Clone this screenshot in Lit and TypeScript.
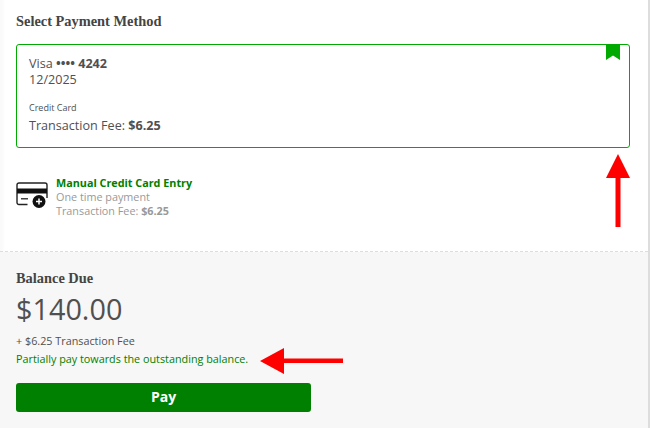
import { LitElement, css, html } from 'lit';
import { customElement } from 'lit/decorators.js';

@customElement('app-root')
export class AppRoot extends LitElement {
  render() {
    return html`
      <div class="page">
        <section class="methods">
          <h2>Select Payment Method</h2>
          <div class="card">
            <svg class="ribbon" width="14" height="16" viewBox="0 0 14 16"><path d="M0 0H14V16L7 11.500L0 16Z" fill="#00aa00"/></svg>
            <div class="line">Visa <b class="dots">••••</b> <b>4242</b></div>
            <div class="line">12/2025</div>
            <div class="type">Credit Card</div>
            <div class="line">Transaction Fee: <b>$6.25</b></div>
          </div>
          <div class="manual">
            <svg class="card-icon" width="32" height="28" viewBox="0 0 32 28" fill="none">
              <path d="M11.5 22.5H3a2 2 0 0 1-2-2V3a2 2 0 0 1 2-2h26a2 2 0 0 1 2 2v13" stroke="#222" stroke-width="1.4"/>
              <rect x="1" y="6.5" width="30" height="5" fill="#111"/>
              <rect x="5" y="16" width="7" height="1.5" fill="#444"/>
              <circle cx="23" cy="19.5" r="6.5" fill="#111"/>
              <path d="M23 16.5v6M20 19.5h6" stroke="#fff" stroke-width="1.5"/>
            </svg>
            <div>
              <div class="manual-title">Manual Credit Card Entry</div>
              <div class="muted">One time payment</div>
              <div class="muted">Transaction Fee: <b>$6.25</b></div>
            </div>
          </div>
        </section>
        <section class="balance">
          <h2>Balance Due</h2>
          <div class="amount">$140.00</div>
          <div class="fee">+ $6.25 Transaction Fee</div>
          <div class="partial">Partially pay towards the outstanding balance.</div>
          <button class="pay">Pay</button>
        </section>
        <svg class="arrow-up" width="24" height="74" viewBox="0 0 24 74"><path d="M12 0L24 24H14.500V73H9.500V24H0Z" fill="#ff0000"/></svg>
        <svg class="arrow-left" width="84" height="26" viewBox="0 0 84 26"><path d="M0 13L24 0V10.500H83V15H24V26Z" fill="#ff0000"/></svg>
      </div>
    `;
  }

  static styles = css`
    :host {
      display: block;
      font-family: "Open Sans", sans-serif;
      color: #505050;
    }
    .page {
      position: relative;
      width: 650px;
      height: 428px;
      overflow: hidden;
      background: linear-gradient(to right, #f9f9f9, #fff 6px);
      border-right: 2px solid #ddd;
      box-sizing: border-box;
    }
    h2 {
      margin: 0;
      font-family: "Liberation Serif", serif;
      font-size: 14.4px;
      line-height: 16px;
      font-weight: 700;
      color: #444;
    }
    .methods {
      height: 252px;
      box-sizing: border-box;
      padding: 13px 18px 0 16px;
      border-bottom: 1px dashed #ddd;
    }
    .card {
      position: relative;
      box-sizing: border-box;
      height: 104px;
      margin-top: 15px;
      padding: 11px 12px 9px;
      border: 1px solid #00aa00;
      border-radius: 3px;
    }
    .ribbon {
      position: absolute;
      top: -1px;
      right: 9px;
    }
    .line {
      font-size: 12.600px;
      line-height: 16px;
    }
    .type {
      margin-top: 13px;
      font-size: 9px;
      line-height: 14px;
    }
    .type + .line {
      margin-top: 3px;
    }
    .manual {
      display: flex;
      gap: 8px;
      margin-top: 28px;
      font-size: 10.800px;
      line-height: 14px;
    }
    .card-icon {
      margin-top: 6px;
    }
    .manual-title {
      font-weight: 700;
      color: #008000;
    }
    .muted {
      color: #999;
    }
    .balance {
      height: 176px;
      box-sizing: border-box;
      padding: 18px 16px 0;
      background: #f7f7f7;
    }
    .amount {
      margin-top: 4px;
      font-size: 28.800px;
      line-height: 38px;
    }
    .fee {
      margin-top: 6px;
      font-size: 10.800px;
      line-height: 14px;
    }
    .partial {
      margin-top: 4px;
      font-size: 10.800px;
      line-height: 14px;
      color: #008000;
    }
    .pay {
      display: block;
      width: 295px;
      height: 29px;
      margin-top: 17px;
      padding: 0 0 2px;
      border: 0;
      border-radius: 3px;
      background: #008000;
      color: #fff;
      font-family: "Open Sans", sans-serif;
      font-size: 14px;
      font-weight: 700;
    }
    .arrow-up {
      position: absolute;
      left: 606px;
      top: 154px;
    }
    .arrow-left {
      position: absolute;
      left: 260px;
      top: 348px;
    }
  `;
}
